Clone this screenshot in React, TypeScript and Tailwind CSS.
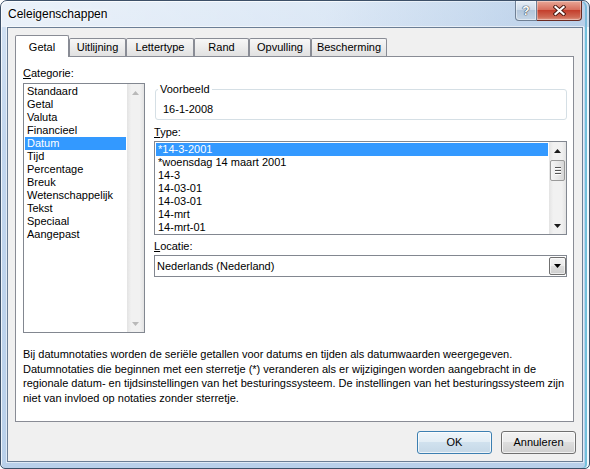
import React from "react";

const categories = [
  "Standaard",
  "Getal",
  "Valuta",
  "Financieel",
  "Datum",
  "Tijd",
  "Percentage",
  "Breuk",
  "Wetenschappelijk",
  "Tekst",
  "Speciaal",
  "Aangepast",
];

const types = [
  "*14-3-2001",
  "*woensdag 14 maart 2001",
  "14-3",
  "14-03-01",
  "14-03-01",
  "14-mrt",
  "14-mrt-01",
];

const tabs = [
  { label: "Getal", w: "w-[54px]" },
  { label: "Uitlijning", w: "w-[57px]" },
  { label: "Lettertype", w: "w-[68px]" },
  { label: "Rand", w: "w-[55px]" },
  { label: "Opvulling", w: "w-[62px]" },
  { label: "Bescherming", w: "w-[76px]" },
];

function Arrow({ dir, color }: { dir: "up" | "down"; color: string }) {
  return (
    <svg width="7" height="4" viewBox="0 0 7 4">
      <polygon points={dir === "up" ? "3.5,0 7,4 0,4" : "0,0 7,0 3.5,4"} fill={color} />
    </svg>
  );
}

function ScrollBar({ enabled }: { enabled: boolean }) {
  const c = enabled ? "#1a1a1a" : "#b9b9b9";
  return (
    <div className="flex w-[17px] flex-col bg-[linear-gradient(90deg,#e3e3e3,#f1f1f1_25%,#f1f1f1_75%,#e3e3e3)]">
      <div className="flex h-[17px] items-center justify-center">
        <Arrow dir="up" color={c} />
      </div>
      {enabled && (
        <div className="mx-px mt-px flex h-[21px] flex-col items-center justify-center gap-px rounded-[2px] border border-[#9a9a9a] bg-[linear-gradient(90deg,#f6f6f6,#e6e6e6_60%,#d6d6d6)]">
          <div className="h-px w-[6px] bg-[#555] shadow-[0_1px_0_#fff]" />
          <div className="mt-px h-px w-[6px] bg-[#555] shadow-[0_1px_0_#fff]" />
          <div className="mt-px h-px w-[6px] bg-[#555] shadow-[0_1px_0_#fff]" />
        </div>
      )}
      <div className="flex-1" />
      <div className="flex h-[17px] items-center justify-center">
        <Arrow dir="down" color={c} />
      </div>
    </div>
  );
}

function ListBox({
  items,
  selected,
  className,
  scrollEnabled,
}: {
  items: string[];
  selected: number;
  className: string;
  scrollEnabled: boolean;
}) {
  return (
    <div className={`flex border border-[#828790] bg-white ${className}`}>
      <div className="flex-1 overflow-hidden p-px">
        {items.map((it, i) => (
          <div
            key={i}
            className={`h-[13px] whitespace-nowrap pl-[2px] leading-[13px] ${
              i === selected ? "bg-[#3399ff] text-white" : ""
            }`}
          >
            {it}
          </div>
        ))}
      </div>
      <ScrollBar enabled={scrollEnabled} />
    </div>
  );
}

function TitleButtons() {
  return (
    <div className="absolute right-[7px] top-0 flex">
      <div className="flex h-[20px] w-[22px] items-center justify-center rounded-bl-[4px] border border-t-0 border-[#6f8095] bg-[linear-gradient(#e6eef7,#cbd9e8_50%,#b3c6db_50%,#c6d6e7)] shadow-[inset_0_0_0_1px_rgba(255,255,255,0.45)]">
        <span className="text-[12px] font-bold leading-none text-white [text-shadow:0_0_1px_#3b4a5c,0_0_1px_#3b4a5c,0_0_1px_#3b4a5c]">
          ?
        </span>
      </div>
      <div className="flex h-[20px] w-[45px] items-center justify-center rounded-br-[4px] border border-l-0 border-t-0 border-[#6a2a22] bg-[linear-gradient(#e8a797,#d7705e_45%,#c43f2d_50%,#cf6a55_85%,#e09a87)] shadow-[inset_0_0_0_1px_rgba(255,255,255,0.35)]">
        <svg width="13" height="11" viewBox="0 0 13 11">
          <path d="M2.5 2 L10.5 9 M10.5 2 L2.5 9" stroke="#4b1810" strokeWidth="4" strokeLinecap="square" />
          <path d="M2.5 2 L10.5 9 M10.5 2 L2.5 9" stroke="#ffffff" strokeWidth="2.2" strokeLinecap="square" />
        </svg>
      </div>
    </div>
  );
}

export default function App() {
  return (
    <div className="h-[469px] w-[590px] bg-white text-[11px] leading-[13px] text-black [font-family:'Liberation_Sans',Arial,sans-serif]">
      <div className="relative flex h-full flex-col rounded-t-[7px] rounded-b-[5px] border border-[#3d5068] bg-[linear-gradient(180deg,#d3e2f3_0%,#c2d6ee_30%,#b9d0ea_100%)] shadow-[inset_1px_1px_0_rgba(255,255,255,0.75),inset_-2px_0_0_#f1f7fb,inset_-4px_0_0_#72c0dc]">
        <div className="flex h-[26px] shrink-0 items-center rounded-t-[6px] bg-[linear-gradient(90deg,rgba(255,255,255,0.55),rgba(255,255,255,0.25)_55%,rgba(140,175,215,0.35))] pl-[7px]">
          <span className="text-[12px] leading-[14px] [text-shadow:0_0_6px_#fff,0_0_3px_#fff]">
            Celeigenschappen
          </span>
        </div>
        <TitleButtons />

        <div className="mx-[6px] mb-[6px] flex flex-1 flex-col border border-[#6b7e95] bg-[#f0f0f0] pl-[7px] pr-[8px] pt-[7px] shadow-[0_0_0_1px_rgba(255,255,255,0.55)]">
          {/* tabs */}
          <div className="flex h-[21px] items-end">
            {tabs.map((t, i) =>
              i === 0 ? (
                <div
                  key={t.label}
                  className={`relative z-10 -mb-px flex h-[22px] items-center justify-center rounded-t-[2px] border border-b-0 border-[#898c95] bg-white pt-px ${t.w}`}
                >
                  {t.label}
                </div>
              ) : (
                <div
                  key={t.label}
                  className={`flex h-[18px] items-center justify-center rounded-t-[2px] border border-b-0 border-[#898c95] bg-[linear-gradient(#f7f7f7,#ececec_50%,#e1e1e1)] ${t.w}`}
                >
                  {t.label}
                </div>
              )
            )}
          </div>

          {/* panel */}
          <div className="h-[366px] border border-[#898c95] bg-white pl-[7px] pt-[10px]">
            <div className="flex gap-[9px]">
              <div className="flex w-[122px] flex-col">
                <div className="h-[13px]">
                  <span className="underline underline-offset-[1px]">C</span>ategorie:
                </div>
                <ListBox
                  items={categories}
                  selected={4}
                  className="mt-[3px] h-[250px]"
                  scrollEnabled={false}
                />
              </div>

              <div className="flex w-[413px] flex-col pt-[16px]">
                <fieldset className="ml-px h-[37px] w-[412px] rounded-[3px] border border-[#d5dfe5] pl-[2px]">
                  <legend className="px-[2px] leading-[13px]">Voorbeeld</legend>
                  <div className="ml-[5px] mt-[7px] leading-[13px]">16-1-2008</div>
                </fieldset>

                <div className="mt-[6px] h-[13px]">
                  <span className="underline underline-offset-[1px]">T</span>ype:
                </div>
                <ListBox
                  items={types}
                  selected={0}
                  className="mt-[2px] h-[94px]"
                  scrollEnabled={true}
                />

                <div className="mt-[5px] h-[13px]">
                  <span className="underline underline-offset-[1px]">L</span>ocatie:
                </div>
                <div className="mt-[2px] flex h-[22px] items-center border border-[#828790] bg-white pl-[2px]">
                  <span className="flex-1">Nederlands (Nederland)</span>
                  <div className="flex h-[18px] w-[17px] items-center justify-center rounded-[2px] border border-[#707070] bg-[linear-gradient(#f2f2f2,#ebebeb_50%,#dddddd_50%,#cfcfcf)] shadow-[inset_0_0_0_1px_rgba(255,255,255,0.6)]">
                    <Arrow dir="down" color="#000" />
                  </div>
                </div>
              </div>
            </div>

            <p className="mt-[14px] leading-[14.5px]">
              Bij datumnotaties worden de seriële getallen voor datums en tijden als datumwaarden weergegeven.
              <br />
              Datumnotaties die beginnen met een sterretje (*) veranderen als er wijzigingen worden aangebracht in de
              <br />
              regionale datum- en tijdsinstellingen van het besturingssysteem. De instellingen van het besturingssysteem zijn
              <br />
              niet van invloed op notaties zonder sterretje.
            </p>
          </div>

          {/* buttons */}
          <div className="-mr-[2px] mt-[9px] flex justify-end gap-[9px]">
            <button className="h-[23px] w-[75px] rounded-[3px] border border-[#3c7fb1] bg-[linear-gradient(#eef5fa,#e2edf5_50%,#d0e1ee_50%,#c5d8e7)] shadow-[inset_0_0_0_1px_rgba(255,255,255,0.7)]">
              OK
            </button>
            <button className="h-[23px] w-[75px] rounded-[3px] border border-[#707070] bg-[linear-gradient(#f2f2f2,#ebebeb_50%,#dddddd_50%,#cfcfcf)] shadow-[inset_0_0_0_1px_rgba(255,255,255,0.7)]">
              Annuleren
            </button>
          </div>
        </div>
      </div>
    </div>
  );
}
